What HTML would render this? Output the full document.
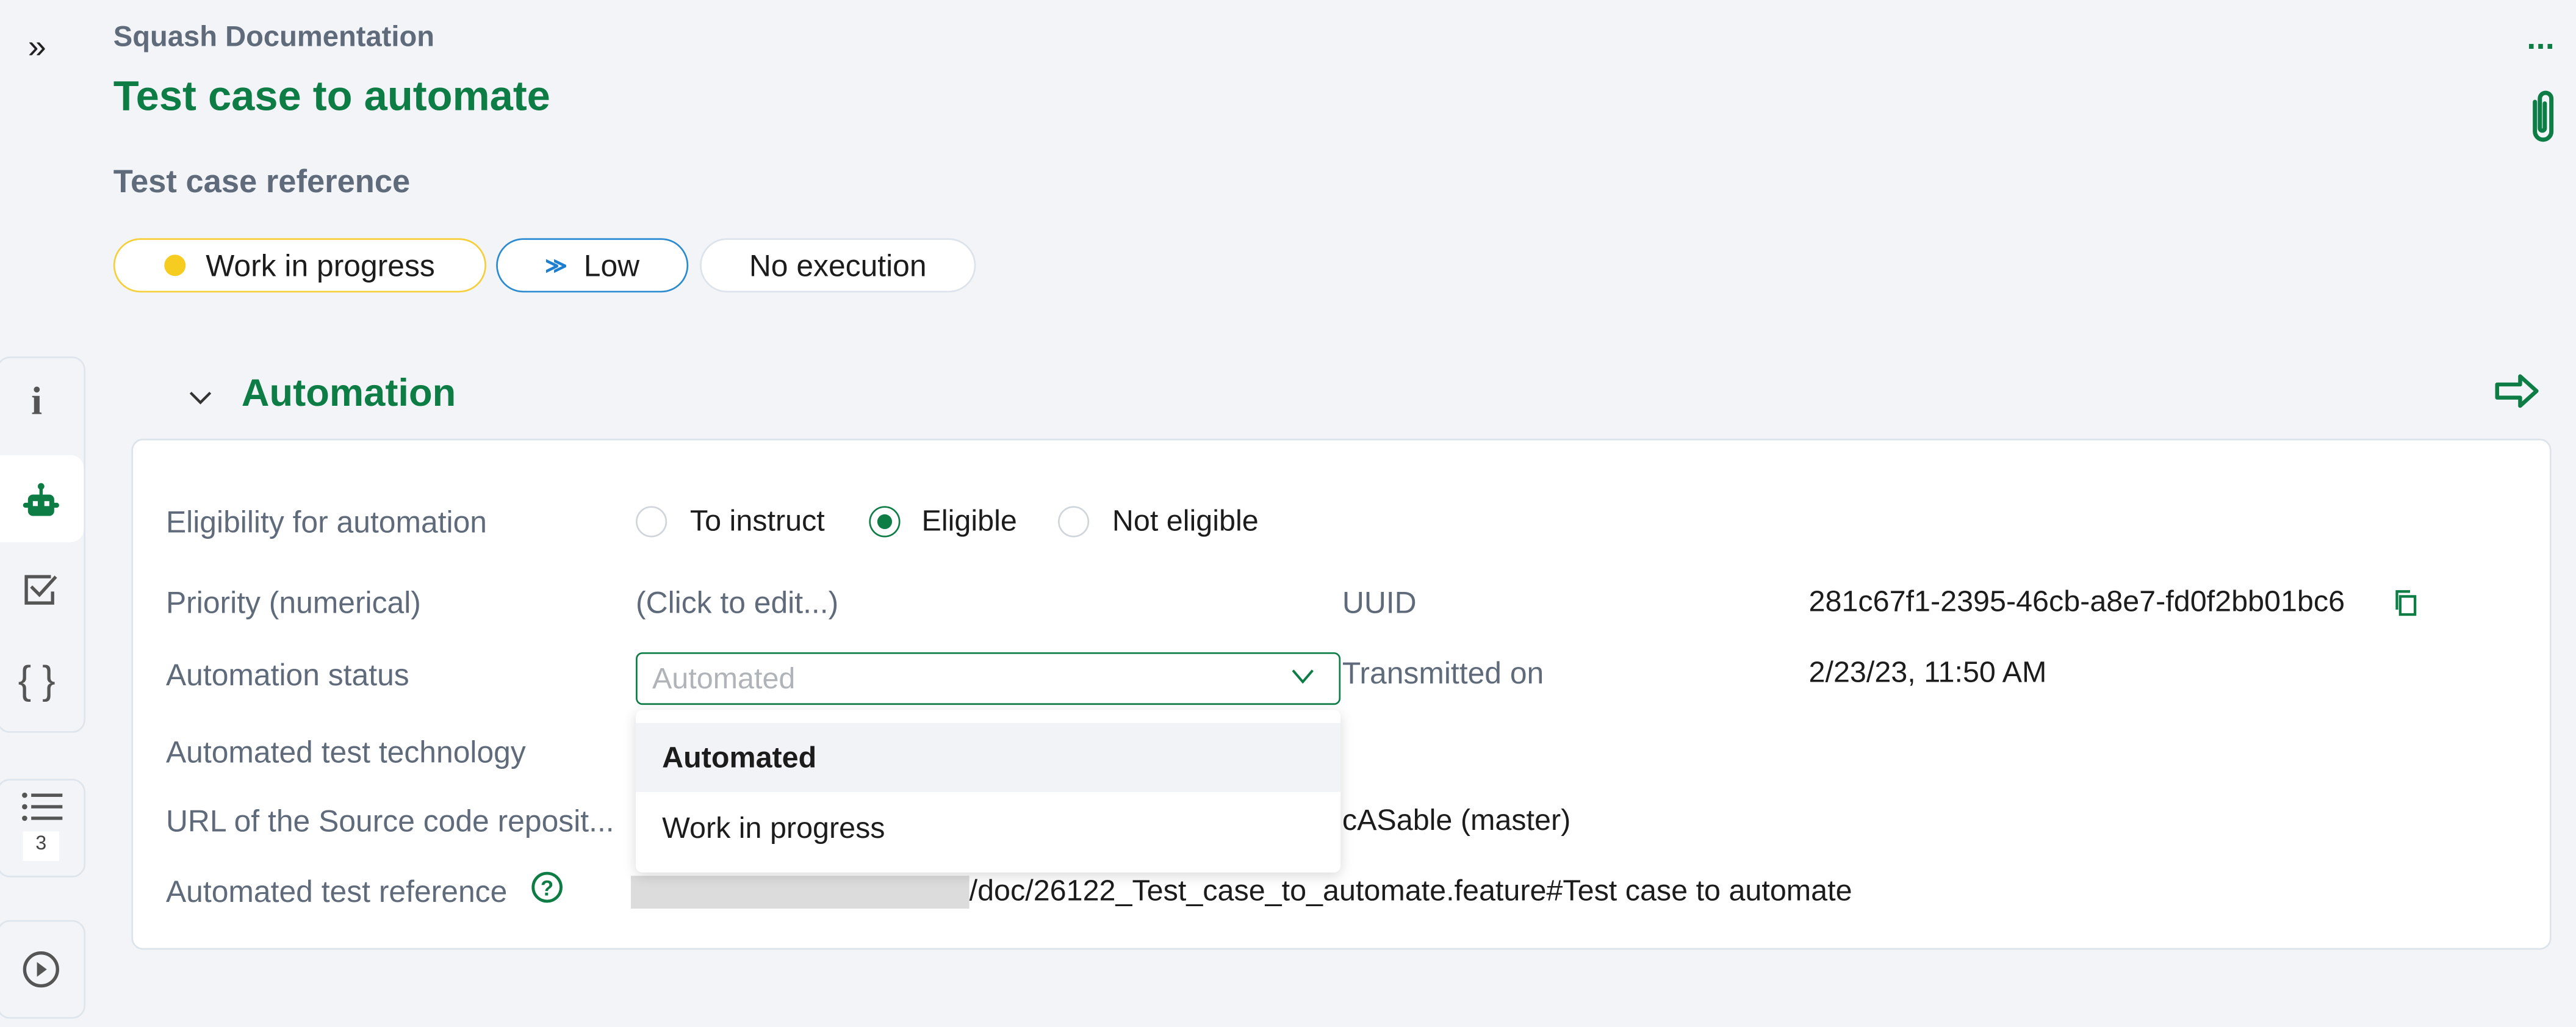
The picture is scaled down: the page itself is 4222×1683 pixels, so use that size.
<!DOCTYPE html>
<html><head><meta charset="utf-8"><style>
html,body{margin:0;padding:0;background:#f2f4f8;overflow:hidden;width:4222px;height:1681px}
#w{position:absolute;left:0;top:0;width:1568px;height:625px;transform:scale(2.6926);transform-origin:0 0;font-family:"Liberation Sans",sans-serif}
.a{position:absolute;white-space:nowrap}
.lbl{color:#5f6b7a;font-size:18.5px}
.val{color:#1c1c1c;font-size:18px}
.pill{position:absolute;top:145px;height:33px;border-radius:17px;background:#fff;box-sizing:border-box;font-size:18.5px;color:#1c1c1c;display:flex;align-items:center;justify-content:center}
.grp{position:absolute;left:-2px;width:54px;border:1px solid #dfe5ec;border-radius:8px;box-sizing:border-box}
.rad{position:absolute;width:19px;height:19px;border-radius:50%;border:1.5px solid #d0d5db;box-sizing:border-box;background:#fff}
</style></head><body><div id="w">
<div class="a" style="left:17px;top:18px;font-size:20px;color:#222">»</div>
<div class="a" style="left:69px;top:12px;font-size:17.5px;font-weight:bold;color:#5f6b7a">Squash Documentation</div>
<div class="a" style="left:69px;top:45px;font-size:25.5px;font-weight:bold;color:#0d7d45">Test case to automate</div>
<div class="a" style="left:69px;top:100px;font-size:19.5px;font-weight:bold;color:#5f6b7a">Test case reference</div>
<div class="pill" style="left:69px;width:227px;border:1.5px solid #f5cf3a"><span style="width:13px;height:13px;border-radius:50%;background:#f5cc1f;margin-right:12px"></span>Work in progress</div>
<div class="pill" style="left:302px;width:117px;border:1.5px solid #2a8ad0"><span style="color:#1e7fd0;font-size:13px;margin-right:10px;font-weight:bold">≫</span>Low</div>
<div class="pill" style="left:426px;width:168px;border:1px solid #dde3ea">No execution</div>
<div class="a" style="left:1538px;top:18px;font-size:20px;font-weight:bold;color:#0d7d45;letter-spacing:-1px">···</div>
<svg class="a" style="left:1536px;top:52px" width="24" height="38" viewBox="0 0 24 38"><path d="M7 10v18a5 5 0 0 0 10 0V8a3.5 3.5 0 0 0-7 0v18a1.5 1.5 0 0 0 3 0V11" fill="none" stroke="#0d7d45" stroke-width="2.6" stroke-linecap="round"/></svg>
<div class="grp" style="top:217px;height:229px"></div>
<div class="a" style="left:0;top:277px;width:51px;height:53px;background:#fff;border-radius:0 8px 8px 0"></div>
<div class="a" style="left:19px;top:232px;font-size:24px;font-weight:bold;color:#555;font-family:'Liberation Serif',serif">i</div>
<svg class="a" style="left:12px;top:293px" width="26" height="24" viewBox="0 0 26 24"><circle cx="13" cy="3" r="2" fill="#0d7d45"/><rect x="12" y="3" width="2" height="5" fill="#0d7d45"/><rect x="5" y="8" width="16" height="13" rx="3" fill="#0d7d45"/><rect x="2" y="13" width="22" height="3" rx="1.5" fill="#0d7d45"/><rect x="8" y="12" width="3" height="3" fill="#fff"/><rect x="15" y="12" width="3" height="3" fill="#fff"/></svg>
<svg class="a" style="left:13px;top:348px" width="26" height="22" viewBox="0 0 26 22"><path d="M18 3H3v16h16v-7" fill="none" stroke="#555" stroke-width="2"/><path d="M6 9l5 5 10-11" fill="none" stroke="#555" stroke-width="2"/></svg>
<div class="a" style="left:11px;top:401px;font-size:24px;color:#555">{ }</div>
<div class="grp" style="top:474px;height:60px"></div>
<svg class="a" style="left:12px;top:480px" width="28" height="24" viewBox="0 0 28 24"><g fill="#555"><circle cx="3" cy="4" r="1.6"/><circle cx="3" cy="11" r="1.6"/><circle cx="3" cy="18" r="1.6"/><rect x="7" y="3" width="19" height="2"/><rect x="7" y="10" width="19" height="2"/><rect x="7" y="17" width="19" height="2"/></g></svg>
<div class="a" style="left:14px;top:506px;width:22px;height:18px;background:#fff;font-size:12px;text-align:center;color:#444">3</div>
<div class="grp" style="top:560px;height:60px"></div>
<svg class="a" style="left:13px;top:578px" width="24" height="24" viewBox="0 0 24 24"><circle cx="12" cy="12" r="10" fill="none" stroke="#555" stroke-width="2"/><path d="M9.5 7.5l6 4.5-6 4.5z" fill="#555"/></svg>
<svg class="a" style="left:114px;top:236px" width="16" height="12" viewBox="0 0 16 12"><path d="M2 3l6 6 6-6" fill="none" stroke="#333" stroke-width="1.6"/></svg>
<div class="a" style="left:147px;top:226px;font-size:23.5px;font-weight:bold;color:#0d7d45">Automation</div>
<svg class="a" style="left:1518px;top:227px" width="28" height="22" viewBox="0 0 28 22"><path d="M2 7h14V2l10 9-10 9v-5H2z" fill="none" stroke="#0d7d45" stroke-width="2.4" stroke-linejoin="round"/></svg>
<div class="a" style="left:80px;top:267px;width:1473px;height:311px;background:#fff;border:1px solid #dde3ea;border-radius:7px;box-sizing:border-box"></div>
<div class="a lbl" style="left:101px;top:307px">Eligibility for automation</div>
<div class="rad" style="left:387px;top:308px"></div><div class="a val" style="left:420px;top:307px">To instruct</div>
<div class="rad" style="left:529px;top:308px;border:1.5px solid #0d7d45"><div style="position:absolute;left:3.5px;top:3.5px;width:9px;height:9px;border-radius:50%;background:#0d7d45"></div></div><div class="a val" style="left:561px;top:307px">Eligible</div>
<div class="rad" style="left:644px;top:308px"></div><div class="a val" style="left:677px;top:307px">Not eligible</div>
<div class="a lbl" style="left:101px;top:356px">Priority (numerical)</div>
<div class="a lbl" style="left:387px;top:356px">(Click to edit...)</div>
<div class="a lbl" style="left:817px;top:356px">UUID</div>
<div class="a val" style="left:1101px;top:356px">281c67f1-2395-46cb-a8e7-fd0f2bb01bc6</div>
<svg class="a" style="left:1457px;top:358px" width="16" height="18" viewBox="0 0 16 18"><rect x="4" y="5" width="9" height="11" fill="none" stroke="#0d7d45" stroke-width="1.6"/><path d="M2 13V2h8" fill="none" stroke="#0d7d45" stroke-width="1.6"/></svg>
<div class="a lbl" style="left:101px;top:400px">Automation status</div>
<div class="a" style="left:387px;top:397px;width:429px;height:32px;border:1.5px solid #0d7d45;border-radius:4px;box-sizing:border-box;background:#fff"></div>
<div class="a" style="left:397px;top:403px;font-size:18px;color:#b0b4b9">Automated</div>
<svg class="a" style="left:785px;top:405px" width="16" height="12" viewBox="0 0 16 12"><path d="M2 3l6 7 6-7" fill="none" stroke="#0d7d45" stroke-width="1.5"/></svg>
<div class="a lbl" style="left:817px;top:399px">Transmitted on</div>
<div class="a val" style="left:1101px;top:399px">2/23/23, 11:50 AM</div>
<div class="a lbl" style="left:101px;top:447px">Automated test technology</div>
<div class="a lbl" style="left:101px;top:489px">URL of the Source code reposit...</div>
<div class="a val" style="left:817px;top:489px">cASable (master)</div>
<div class="a lbl" style="left:101px;top:532px">Automated test reference</div>
<svg class="a" style="left:323px;top:529px" width="20" height="22" viewBox="0 0 20 22"><circle cx="10" cy="11" r="8.5" fill="none" stroke="#0d7d45" stroke-width="1.8"/><text x="10" y="16" font-size="13" font-weight="bold" text-anchor="middle" fill="#0d7d45" font-family="Liberation Sans">?</text></svg>
<div class="a" style="left:384px;top:533px;width:206px;height:20px;background:#dcdcdc"></div>
<div class="a val" style="left:590px;top:532px">/doc/26122_Test_case_to_automate.feature#Test case to automate</div>
<div class="a" style="left:387px;top:432px;width:429px;height:99px;background:#fff;border-radius:4px;box-shadow:0 2px 8px rgba(0,0,0,.15)"></div>
<div class="a" style="left:387px;top:440px;width:429px;height:42px;background:#f2f3f6"></div>
<div class="a" style="left:403px;top:451px;font-size:18px;font-weight:bold;color:#1c1c1c">Automated</div>
<div class="a val" style="left:403px;top:494px">Work in progress</div>
</div></body></html>
